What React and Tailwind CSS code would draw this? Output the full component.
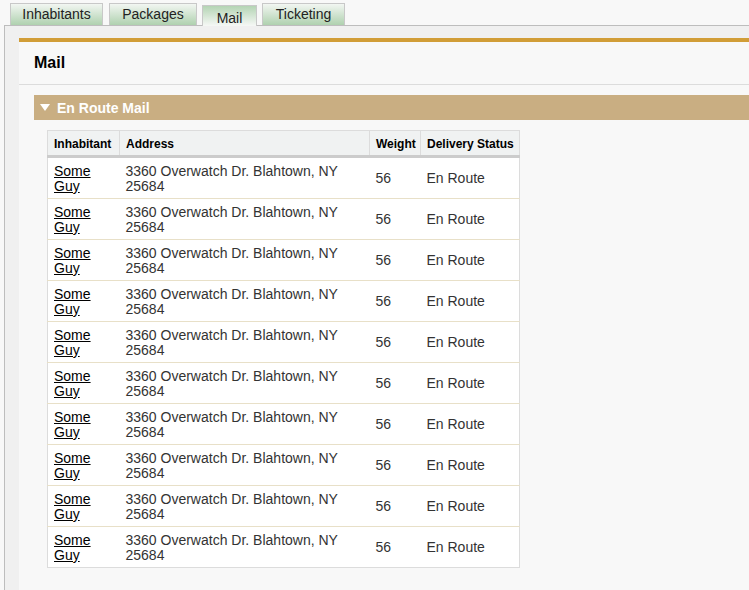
import React from 'react';

const tabs = [
  { label: 'Inhabitants', w: 'w-[93px] mr-px' },
  { label: 'Packages', w: 'w-[88px]' },
  { label: 'Mail', w: 'w-[55px]' },
  { label: 'Ticketing', w: 'w-[83px]' },
];

const rows = Array.from({ length: 10 }, () => ({
  name: 'Some Guy',
  address: '3360 Overwatch Dr. Blahtown, NY 25684',
  weight: 56,
  status: 'En Route',
}));

const App = () => {
  return (
    <div className="h-[590px] w-[749px] overflow-hidden bg-[#f8f8f8] font-['Liberation_Sans',Arial,sans-serif] text-[#222]">
      {/* tab strip */}
      <div className="flex items-end gap-[5px] pl-[10px] h-[25px]">
        {tabs.map((t) =>
          t.label === 'Mail' ? (
            <div
              key={t.label}
              className={`relative z-10 -mb-px h-[21px] ${t.w} text-center border border-b-0 border-[#c8c8c8] bg-gradient-to-b from-[#b4d4b4] to-[#f6f8f6] text-[14px] leading-[24px]`}
            >
              {t.label}
            </div>
          ) : (
            <div
              key={t.label}
              className={`h-[22px] self-start mt-[3px] ${t.w} text-center border border-b-0 border-[#c8c8c8] bg-gradient-to-b from-[#f2f6f2] to-[#afd1af] text-[14px] leading-[20px]`}
            >
              {t.label}
            </div>
          )
        )}
      </div>

      {/* panel */}
      <div className="ml-[4px] h-full border-l border-t border-[#bdbdbd] bg-[#f0f0f0] pl-[14px] pt-[12px]">
        <div className="h-full border-t-4 border-[#d19d37] bg-[#f8f8f8]">
          <div className="h-[43px] border-b border-[#dcdcdc] pl-[15px] flex items-center">
            <h1 className="text-[16px] font-bold text-black">Mail</h1>
          </div>

          <div className="pl-[15px] pt-[10px]">
            <div className="h-[25px] bg-[#c9ae82] flex items-center pl-[6px] gap-[7px] text-white font-bold text-[14px]">
              <svg width="10" height="8" viewBox="0 0 10 8">
                <path d="M0 0 L10 0 L5 7 Z" fill="#fff" />
              </svg>
              <span className="mt-px">En Route Mail</span>
            </div>

            <table className="mt-[10px] ml-[13px] w-[472px] table-fixed border-collapse border border-[#dcdcdc] bg-white text-[14px]">
              <colgroup>
                <col className="w-[72px]" />
                <col className="w-[250px]" />
                <col className="w-[51px]" />
                <col className="w-[99px]" />
              </colgroup>
              <thead>
                <tr className="bg-[#f0f2f2] border-b-[3px] border-[#cccccc] text-[12px] font-bold text-black">
                  <th className="h-[26px] pt-px px-[6px] text-left border-r border-[#dcdcdc] whitespace-nowrap">Inhabitant</th>
                  <th className="pt-px px-[6px] text-left border-r border-[#dcdcdc]">Address</th>
                  <th className="pt-px px-[6px] text-left border-r border-[#dcdcdc]">Weight</th>
                  <th className="pt-px px-[6px] text-left whitespace-nowrap">Delivery Status</th>
                </tr>
              </thead>
              <tbody>
                {rows.map((r, i) => (
                  <tr key={i} className={i > 0 ? 'border-t border-[#e8e0c8]' : ''}>
                    <td className={`${i === 0 ? 'h-[42px]' : 'h-[41px]'} px-[6px] pt-[2px] leading-[15px] align-middle`}>
                      <a href="#" className="underline text-black">
                        Some
                        <br />
                        Guy
                      </a>
                    </td>
                    <td className="px-[6px] pt-[2px] leading-[15px] text-[#333]">
                      3360 Overwatch Dr. Blahtown, NY
                      <br />
                      25684
                    </td>
                    <td className="px-[6px] text-[#333]">{r.weight}</td>
                    <td className="px-[6px] text-[#333]">{r.status}</td>
                  </tr>
                ))}
              </tbody>
            </table>
          </div>
        </div>
      </div>
    </div>
  );
};

export default App;
